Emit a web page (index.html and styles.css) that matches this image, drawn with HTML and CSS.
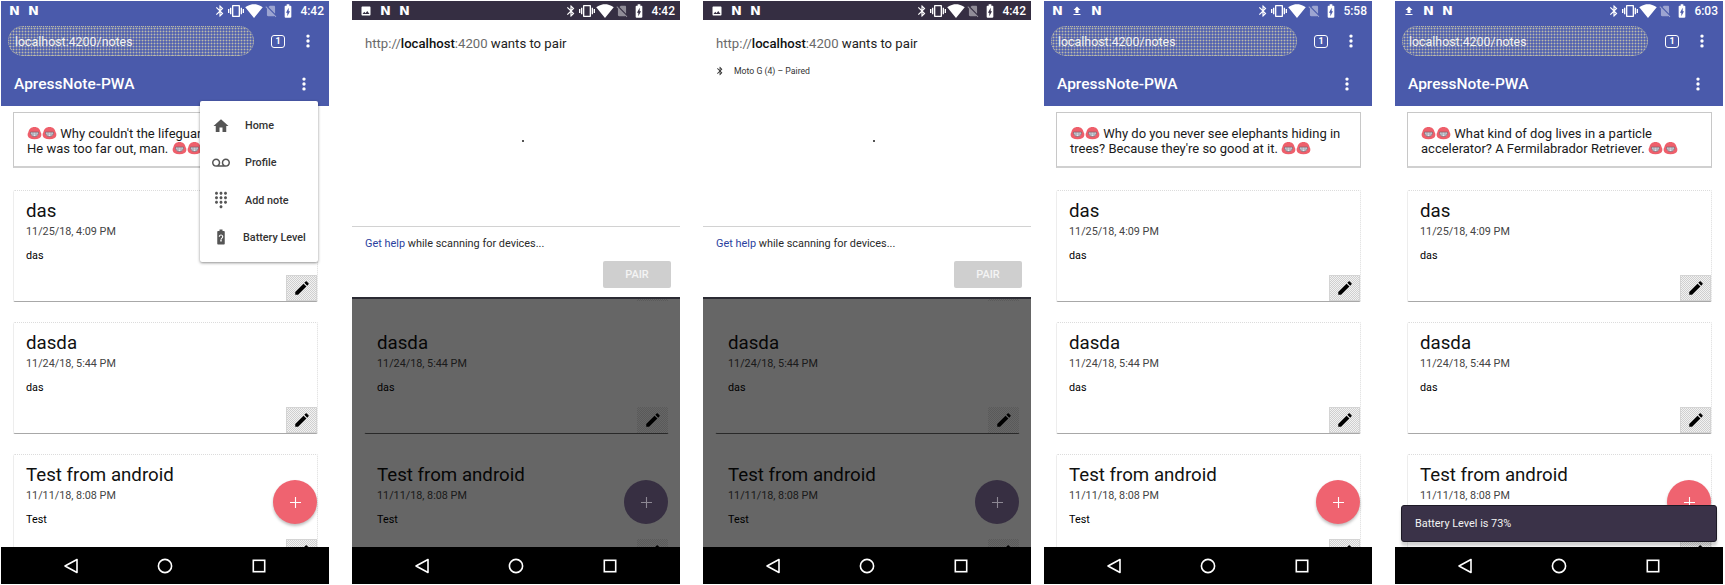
FILE: index.html
```html
<!DOCTYPE html>
<html lang="en">
<head>
<meta charset="utf-8">
<title>ApressNote-PWA</title>
<link rel="stylesheet" href="styles.css">
</head>
<body>
<svg class="sprite" aria-hidden="true">
  <symbol id="i-home" viewBox="0 0 24 24"><path d="M10 20v-6h4v6h5v-8h3L12 3 2 12h3v8z"/></symbol>
  <symbol id="i-voicemail" viewBox="0 0 24 24"><path d="M18.5 6C15.46 6 13 8.46 13 11.5c0 1.33.47 2.55 1.26 3.5H9.74c.79-.95 1.26-2.17 1.26-3.5C11 8.46 8.54 6 5.5 6S0 8.46 0 11.5 2.46 17 5.5 17h13c3.04 0 5.5-2.46 5.5-5.5S21.54 6 18.5 6zm-13 9C3.57 15 2 13.43 2 11.5S3.57 8 5.5 8 9 9.57 9 11.5 7.43 15 5.5 15zm13 0c-1.93 0-3.5-1.57-3.5-3.5S16.57 8 18.5 8 22 9.57 22 11.5 20.43 15 18.5 15z"/></symbol>
  <symbol id="i-dialpad" viewBox="0 0 24 24"><path d="M12 19c-1.1 0-2 .9-2 2s.9 2 2 2 2-.9 2-2-.9-2-2-2zM6 1c-1.1 0-2 .9-2 2s.9 2 2 2 2-.9 2-2-.9-2-2-2zm0 6c-1.1 0-2 .9-2 2s.9 2 2 2 2-.9 2-2-.9-2-2-2zm0 6c-1.1 0-2 .9-2 2s.9 2 2 2 2-.9 2-2-.9-2-2-2zm12-8c1.1 0 2-.9 2-2s-.9-2-2-2-2 .9-2 2 .9 2 2 2zm-6 8c-1.1 0-2 .9-2 2s.9 2 2 2 2-.9 2-2-.9-2-2-2zm6 0c-1.1 0-2 .9-2 2s.9 2 2 2 2-.9 2-2-.9-2-2-2zm0-6c-1.1 0-2 .9-2 2s.9 2 2 2 2-.9 2-2-.9-2-2-2zm-6 0c-1.1 0-2 .9-2 2s.9 2 2 2 2-.9 2-2-.9-2-2-2zm0-6c-1.1 0-2 .9-2 2s.9 2 2 2 2-.9 2-2-.9-2-2-2z"/></symbol>
  <symbol id="i-battery-unknown" viewBox="0 0 24 24"><path d="M15.67 4H14V2h-4v2H8.33C7.6 4 7 4.6 7 5.33v15.33C7 21.4 7.6 22 8.33 22h7.33c.74 0 1.34-.6 1.34-1.33V5.33C17 4.6 16.4 4 15.67 4zm-2.72 13.95h-1.9v-1.9h1.9v1.9zm1.35-4.77s-.38.42-.67.71c-.48.48-.83 1.15-.83 1.61h-1.6c0-.83.46-1.52.93-2l.93-.94c.27-.27.44-.65.44-1.06 0-.83-.67-1.5-1.5-1.5s-1.5.67-1.5 1.5H9c0-1.66 1.34-3 3-3s3 1.34 3 3c0 .66-.27 1.26-.7 1.68z"/></symbol>
  <symbol id="i-edit" viewBox="0 0 24 24"><path d="M3 17.25V21h3.75L17.81 9.94l-3.75-3.75L3 17.25zM20.71 7.04c.39-.39.39-1.02 0-1.41l-2.34-2.34c-.39-.39-1.02-.39-1.41 0l-1.83 1.83 3.75 3.75 1.83-1.83z"/></symbol>
  <symbol id="i-bt" viewBox="0 0 24 24"><path d="M17.71 7.71L12 2h-1v7.59L6.41 5 5 6.41 10.59 12 5 17.59 6.41 19 11 14.41V22h1l5.71-5.71-4.3-4.29 4.3-4.29zM13 5.83l1.88 1.88L13 9.59V5.83zm1.88 10.46L13 18.17v-3.76l1.88 1.88z"/></symbol>
  <symbol id="i-vib" viewBox="0 0 24 24"><path d="M0 15h2V9H0v6zm3 2h2V7H3v10zm19-8v6h2V9h-2zm-3 8h2V7h-2v10zM16.5 3h-9C6.67 3 6 3.67 6 4.5v15c0 .83.67 1.5 1.5 1.5h9c.83 0 1.5-.67 1.5-1.5v-15c0-.83-.67-1.5-1.5-1.5zM16 19H8V5h8v14z"/></symbol>
  <symbol id="i-wifi" viewBox="0 0 24 24"><path d="M12.01 21.49L23.64 7c-.45-.34-4.93-4-11.64-4C5.28 3 .81 6.66.36 7l11.63 14.49.01.01.01-.01z"/></symbol>
  <symbol id="i-nosim" viewBox="0 0 24 24"><path d="M18.99 5c0-1.1-.89-2-1.99-2h-7L7.66 5.34 19 16.68 18.99 5zM3.65 3.88L2.38 5.15 5 7.77V19c0 1.1.9 2 2 2h10.01c.35 0 .67-.1.96-.26l1.88 1.88 1.27-1.27L3.65 3.88z"/></symbol>
  <symbol id="i-batt" viewBox="0 0 24 24"><path d="M15.67 4H14V2h-4v2H8.33C7.6 4 7 4.6 7 5.33v15.33C7 21.4 7.6 22 8.33 22h7.33c.74 0 1.34-.6 1.34-1.33V5.33C17 4.6 16.4 4 15.67 4zM11 20v-5.5H9L13 7v5.5h2L11 20z"/></symbol>
  <symbol id="i-upload" viewBox="0 0 24 24"><path d="M9 16h6v-6h4l-7-7-7 7h4v6zm-4 2h14v2H5z"/></symbol>
  <symbol id="i-photo" viewBox="0 0 24 24"><path d="M21 19V5c0-1.1-.9-2-2-2H5c-1.1 0-2 .9-2 2v14c0 1.1.9 2 2 2h14c1.1 0 2-.9 2-2zM8.500 13.500l2.500 3.010L14.500 12l4.500 6H5l3.500-4.500z"/></symbol>
  <symbol id="i-dots" viewBox="0 0 6 20"><circle cx="3" cy="3" r="2.4"/><circle cx="3" cy="10" r="2.4"/><circle cx="3" cy="17" r="2.4"/></symbol>
  <symbol id="i-plus" viewBox="0 0 12 12"><path d="M5.400 0h1.200v5.400H12v1.200H6.600V12H5.400V6.600H0V5.400h5.400z"/></symbol>
  <symbol id="i-back" viewBox="0 0 16 16"><path d="M14 1.500v13L2 8z" fill="none" stroke="#fff" stroke-width="1.600" stroke-linejoin="round"/></symbol>
  <symbol id="i-circle" viewBox="0 0 16 16"><circle cx="8" cy="8" r="6.600" fill="none" stroke="#fff" stroke-width="1.600"/></symbol>
  <symbol id="i-square" viewBox="0 0 16 16"><rect x="2.300" y="2.300" width="11.400" height="11.400" fill="none" stroke="#fff" stroke-width="1.600"/></symbol>
  <symbol id="i-emoji" viewBox="0 0 16 16"><path d="M8 1c4 0 6.500 2.500 7 6 .8 1 1 2.500.7 4-.5 2.500-3.200 4-7.700 4S.8 13.500.3 11C0 9.500.2 8 1 7 1.500 3.500 4 1 8 1z" fill="#ee5f6b"/><path d="M3.400 7h9.200c0 3-1.900 5-4.600 5s-4.600-2-4.600-5z" fill="#e4e7ee" stroke="#5a5f6b" stroke-width=".7"/><path d="M3.800 9.200h8.400M6.300 7v4.800M9.700 7v4.800" stroke="#7a7e8a" stroke-width=".6"/></symbol>
</svg>

<main class="strip">

  <!-- Phone 1: menu open -->
  <section class="phone">
    <header class="status">
      <div class="status-left"><b class="notif">N</b><b class="notif">N</b></div>
      <div class="status-right">
        <svg class="s-ic s-bt"><use href="#i-bt"/></svg><svg class="s-ic s-vib"><use href="#i-vib"/></svg><svg class="s-ic s-wifi"><use href="#i-wifi"/></svg><svg class="s-ic s-dim"><use href="#i-nosim"/></svg><svg class="s-ic s-batt"><use href="#i-batt"/></svg><span class="clock">4:42</span>
      </div>
    </header>
    <div class="browser">
      <div class="pill">localhost:4200/notes</div>
      <span class="tabs">1</span>
      <svg class="dots"><use href="#i-dots"/></svg>
    </div>
    <div class="appbar">
      <h1 class="app-title">ApressNote-PWA</h1>
      <svg class="dots"><use href="#i-dots"/></svg>
    </div>
    <div class="content">
      <div class="joke"><svg class="emoji"><use href="#i-emoji"/></svg><svg class="emoji"><use href="#i-emoji"/></svg> Why couldn't the lifeguard save the hippie? He was too far out, man. <svg class="emoji"><use href="#i-emoji"/></svg><svg class="emoji"><use href="#i-emoji"/></svg></div>
      <article class="card"><h2 class="card-title">das</h2><p class="card-date">11/25/18, 4:09 PM</p><p class="card-body">das</p><div class="edit"><svg><use href="#i-edit"/></svg></div></article>
      <article class="card"><h2 class="card-title">dasda</h2><p class="card-date">11/24/18, 5:44 PM</p><p class="card-body">das</p><div class="edit"><svg><use href="#i-edit"/></svg></div></article>
      <article class="card"><h2 class="card-title">Test from android</h2><p class="card-date">11/11/18, 8:08 PM</p><p class="card-body">Test</p><div class="edit"><svg><use href="#i-edit"/></svg></div></article>
      <div class="fab"><svg><use href="#i-plus"/></svg></div>
    </div>
    <nav class="navbar"><svg><use href="#i-back"/></svg><svg><use href="#i-circle"/></svg><svg><use href="#i-square"/></svg></nav>
    <ul class="menu">
      <li class="menu-item"><svg><use href="#i-home"/></svg><span>Home</span></li>
      <li class="menu-item"><svg><use href="#i-voicemail"/></svg><span>Profile</span></li>
      <li class="menu-item"><svg><use href="#i-dialpad"/></svg><span>Add note</span></li>
      <li class="menu-item menu-item--tight"><svg><use href="#i-battery-unknown"/></svg><span>Battery Level</span></li>
    </ul>
  </section>

  <!-- Phone 2: chooser scanning -->
  <section class="phone phone--dialog">
    <header class="status status--dark">
      <div class="status-left"><svg class="s-ic s-left"><use href="#i-photo"/></svg><b class="notif">N</b><b class="notif">N</b></div>
      <div class="status-right">
        <svg class="s-ic s-bt"><use href="#i-bt"/></svg><svg class="s-ic s-vib"><use href="#i-vib"/></svg><svg class="s-ic s-wifi"><use href="#i-wifi"/></svg><svg class="s-ic s-dim"><use href="#i-nosim"/></svg><svg class="s-ic s-batt"><use href="#i-batt"/></svg><span class="clock">4:42</span>
      </div>
    </header>
    <div class="browser"></div>
    <div class="appbar"></div>
    <div class="content">
      <div class="joke"></div>
      <article class="card"><h2 class="card-title">das</h2><p class="card-date">11/25/18, 4:09 PM</p><p class="card-body">das</p><div class="edit"><svg><use href="#i-edit"/></svg></div></article>
      <article class="card"><h2 class="card-title">dasda</h2><p class="card-date">11/24/18, 5:44 PM</p><p class="card-body">das</p><div class="edit"><svg><use href="#i-edit"/></svg></div></article>
      <article class="card"><h2 class="card-title">Test from android</h2><p class="card-date">11/11/18, 8:08 PM</p><p class="card-body">Test</p><div class="edit"><svg><use href="#i-edit"/></svg></div></article>
      <div class="scrim"></div>
      <div class="fab fab--dim"><svg><use href="#i-plus"/></svg></div>
    </div>
    <nav class="navbar"><svg><use href="#i-back"/></svg><svg><use href="#i-circle"/></svg><svg><use href="#i-square"/></svg></nav>
    <div class="chooser">
      <p class="chooser-title"><span class="muted">http://</span><strong>localhost</strong><span class="muted">:4200</span> wants to pair</p>
      <div class="chooser-list"><i class="spinner"></i></div>
      <p class="chooser-help"><a class="link">Get help</a> while scanning for devices...</p>
      <div class="chooser-actions"><span class="pair">PAIR</span></div>
    </div>
  </section>

  <!-- Phone 3: chooser with device -->
  <section class="phone phone--dialog">
    <header class="status status--dark">
      <div class="status-left"><svg class="s-ic s-left"><use href="#i-photo"/></svg><b class="notif">N</b><b class="notif">N</b></div>
      <div class="status-right">
        <svg class="s-ic s-bt"><use href="#i-bt"/></svg><svg class="s-ic s-vib"><use href="#i-vib"/></svg><svg class="s-ic s-wifi"><use href="#i-wifi"/></svg><svg class="s-ic s-dim"><use href="#i-nosim"/></svg><svg class="s-ic s-batt"><use href="#i-batt"/></svg><span class="clock">4:42</span>
      </div>
    </header>
    <div class="browser"></div>
    <div class="appbar"></div>
    <div class="content">
      <div class="joke"></div>
      <article class="card"><h2 class="card-title">das</h2><p class="card-date">11/25/18, 4:09 PM</p><p class="card-body">das</p><div class="edit"><svg><use href="#i-edit"/></svg></div></article>
      <article class="card"><h2 class="card-title">dasda</h2><p class="card-date">11/24/18, 5:44 PM</p><p class="card-body">das</p><div class="edit"><svg><use href="#i-edit"/></svg></div></article>
      <article class="card"><h2 class="card-title">Test from android</h2><p class="card-date">11/11/18, 8:08 PM</p><p class="card-body">Test</p><div class="edit"><svg><use href="#i-edit"/></svg></div></article>
      <div class="scrim"></div>
      <div class="fab fab--dim"><svg><use href="#i-plus"/></svg></div>
    </div>
    <nav class="navbar"><svg><use href="#i-back"/></svg><svg><use href="#i-circle"/></svg><svg><use href="#i-square"/></svg></nav>
    <div class="chooser">
      <p class="chooser-title"><span class="muted">http://</span><strong>localhost</strong><span class="muted">:4200</span> wants to pair</p>
      <div class="chooser-list"><div class="device"><svg><use href="#i-bt"/></svg><span>Moto G (4) – Paired</span></div><i class="spinner"></i></div>
      <p class="chooser-help"><a class="link">Get help</a> while scanning for devices...</p>
      <div class="chooser-actions"><span class="pair">PAIR</span></div>
    </div>
  </section>

  <!-- Phone 4 -->
  <section class="phone phone--gap">
    <header class="status">
      <div class="status-left"><b class="notif">N</b><svg class="s-ic s-left"><use href="#i-upload"/></svg><b class="notif">N</b></div>
      <div class="status-right">
        <svg class="s-ic s-bt"><use href="#i-bt"/></svg><svg class="s-ic s-vib"><use href="#i-vib"/></svg><svg class="s-ic s-wifi"><use href="#i-wifi"/></svg><svg class="s-ic s-dim"><use href="#i-nosim"/></svg><svg class="s-ic s-batt"><use href="#i-batt"/></svg><span class="clock">5:58</span>
      </div>
    </header>
    <div class="browser">
      <div class="pill">localhost:4200/notes</div>
      <span class="tabs">1</span>
      <svg class="dots"><use href="#i-dots"/></svg>
    </div>
    <div class="appbar">
      <h1 class="app-title">ApressNote-PWA</h1>
      <svg class="dots"><use href="#i-dots"/></svg>
    </div>
    <div class="content">
      <div class="joke"><svg class="emoji"><use href="#i-emoji"/></svg><svg class="emoji"><use href="#i-emoji"/></svg> Why do you never see elephants hiding in trees? Because they're so good at it. <svg class="emoji"><use href="#i-emoji"/></svg><svg class="emoji"><use href="#i-emoji"/></svg></div>
      <article class="card"><h2 class="card-title">das</h2><p class="card-date">11/25/18, 4:09 PM</p><p class="card-body">das</p><div class="edit"><svg><use href="#i-edit"/></svg></div></article>
      <article class="card"><h2 class="card-title">dasda</h2><p class="card-date">11/24/18, 5:44 PM</p><p class="card-body">das</p><div class="edit"><svg><use href="#i-edit"/></svg></div></article>
      <article class="card"><h2 class="card-title">Test from android</h2><p class="card-date">11/11/18, 8:08 PM</p><p class="card-body">Test</p><div class="edit"><svg><use href="#i-edit"/></svg></div></article>
      <div class="fab"><svg><use href="#i-plus"/></svg></div>
    </div>
    <nav class="navbar"><svg><use href="#i-back"/></svg><svg><use href="#i-circle"/></svg><svg><use href="#i-square"/></svg></nav>
  </section>

  <!-- Phone 5: toast -->
  <section class="phone">
    <header class="status">
      <div class="status-left"><svg class="s-ic s-left"><use href="#i-upload"/></svg><b class="notif">N</b><b class="notif">N</b></div>
      <div class="status-right">
        <svg class="s-ic s-bt"><use href="#i-bt"/></svg><svg class="s-ic s-vib"><use href="#i-vib"/></svg><svg class="s-ic s-wifi"><use href="#i-wifi"/></svg><svg class="s-ic s-dim"><use href="#i-nosim"/></svg><svg class="s-ic s-batt"><use href="#i-batt"/></svg><span class="clock">6:03</span>
      </div>
    </header>
    <div class="browser">
      <div class="pill">localhost:4200/notes</div>
      <span class="tabs">1</span>
      <svg class="dots"><use href="#i-dots"/></svg>
    </div>
    <div class="appbar">
      <h1 class="app-title">ApressNote-PWA</h1>
      <svg class="dots"><use href="#i-dots"/></svg>
    </div>
    <div class="content">
      <div class="joke"><svg class="emoji"><use href="#i-emoji"/></svg><svg class="emoji"><use href="#i-emoji"/></svg> What kind of dog lives in a particle accelerator? A Fermilabrador Retriever. <svg class="emoji"><use href="#i-emoji"/></svg><svg class="emoji"><use href="#i-emoji"/></svg></div>
      <article class="card"><h2 class="card-title">das</h2><p class="card-date">11/25/18, 4:09 PM</p><p class="card-body">das</p><div class="edit"><svg><use href="#i-edit"/></svg></div></article>
      <article class="card"><h2 class="card-title">dasda</h2><p class="card-date">11/24/18, 5:44 PM</p><p class="card-body">das</p><div class="edit"><svg><use href="#i-edit"/></svg></div></article>
      <article class="card"><h2 class="card-title">Test from android</h2><p class="card-date">11/11/18, 8:08 PM</p><p class="card-body">Test</p><div class="edit"><svg><use href="#i-edit"/></svg></div></article>
      <div class="fab"><svg><use href="#i-plus"/></svg></div>
      <div class="toast">Battery Level is 73%</div>
    </div>
    <nav class="navbar"><svg><use href="#i-back"/></svg><svg><use href="#i-circle"/></svg><svg><use href="#i-square"/></svg></nav>
  </section>

</main>
</body>
</html>
```

FILE: styles.css
```css
* { box-sizing: border-box; }

html, body {
  margin: 0;
  padding: 0;
  background: #fff;
  height: 585px;
  overflow: hidden;
  font-family: Roboto, "Liberation Sans", sans-serif;
  color: #111;
}

.sprite { display: none; }

.strip {
  display: flex;
  gap: 23px;
  padding: 1px 0 0 1px;
}

.phone {
  position: relative;
  flex: 0 0 328px;
  height: 583px;
  display: flex;
  flex-direction: column;
  overflow: hidden;
  background: #fff;
}

.phone--gap { margin-left: -10px; }

/* status bar */
.status {
  flex: 0 0 19px;
  display: flex;
  justify-content: space-between;
  align-items: center;
  padding: 0 5px 0 8px;
  background: #4a5aab;
  color: #fff;
}
.status--dark { background: #352e42; }
.status-left { display: flex; align-items: center; gap: 8px; }
.status-right { display: flex; align-items: center; gap: 1px; }
.notif {
  font-family: "DejaVu Sans", sans-serif;
  font-size: 13px;
  font-weight: 700;
  line-height: 1;
  width: 11px;
  text-align: center;
}
.s-ic { width: 14px; height: 14px; fill: #fff; }
.s-left { width: 12px; height: 12px; }
.s-bt { width: 14px; height: 14px; }
.s-vib { width: 16px; height: 16px; }
.s-wifi { width: 18px; height: 18px; }
.s-dim { opacity: .45; }
.s-batt { width: 16px; height: 16px; margin-left: 1px; }
.clock { font-size: 12px; font-weight: 500; margin-left: 3px; }

/* browser + app toolbars */
.browser {
  flex: 0 0 42px;
  display: flex;
  align-items: center;
  padding: 0 18px 0 7px;
  background: #4a5aab;
  color: #fff;
}
.pill {
  flex: 0 0 246px;
  height: 30px;
  border-radius: 15px;
  padding-left: 6px;
  display: flex;
  align-items: center;
  font-size: 12.4px;
  color: #f2f2f2;
  border: 1px dotted #b9b7a4;
  background: radial-gradient(circle, #bdbba8 .8px, transparent 1.1px) 0 0 / 3px 3px, rgba(255, 255, 255, .07);
}
.tabs {
  margin-left: 17px;
  width: 14px;
  height: 13px;
  border: 1.5px solid #fff;
  border-radius: 3px;
  font-size: 9px;
  font-weight: 700;
  line-height: 10px;
  text-align: center;
}
.dots { width: 6px; height: 14px; fill: #fff; margin-left: auto; }
.appbar {
  flex: 0 0 44px;
  display: flex;
  align-items: center;
  padding: 0 22px 0 13px;
  background: #4a5aab;
  color: #fff;
}
.app-title {
  margin: 0;
  font-size: 15.5px;
  font-weight: 500;
}

/* content */
.content {
  position: relative;
  flex: 1;
  min-height: 0;
  overflow: hidden;
  padding: 6px 11px 0 12px;
  background: #fff;
}
.joke {
  height: 56px;
  margin-bottom: 22px;
  padding: 13px 8px 0 13px;
  border: 1px solid #c8c8c8;
  border-bottom: 2px solid #d0d0d0;
  font-size: 13px;
  line-height: 15px;
  color: #1a1a1a;
}
.emoji { width: 15px; height: 14px; vertical-align: -2px; }
.card {
  position: relative;
  height: 112px;
  margin-bottom: 20px;
  padding: 9px 12px 0;
  border: 1px dotted #dcdcdc;
  border-bottom: 1px solid #a8a8a8;
  border-radius: 2px;
}
.card-title {
  margin: 0;
  font-size: 18.7px;
  font-weight: 400;
  line-height: 22px;
  color: #111;
}
.card-date {
  margin: 2px 0 0;
  font-size: 10.8px;
  line-height: 16px;
  color: #444;
}
.card-body {
  margin: 9px 0 0;
  font-size: 10.8px;
  line-height: 14px;
  color: #000;
}
.edit {
  position: absolute;
  right: 0;
  bottom: 0;
  width: 31px;
  height: 26px;
  display: flex;
  align-items: center;
  justify-content: center;
  border: 1px solid #d4d4d4;
  background: repeating-conic-gradient(#cfcfcf 0 25%, #f2f2f2 0 50%) 0 0 / 2px 2px;
}
.edit svg { width: 18px; height: 18px; fill: #000; }

/* notes seen through the scrim lose their card borders */
.phone--dialog .card {
  border-color: transparent;
  border-bottom: 1px solid #666;
}
.phone--dialog .card:first-of-type { border-bottom-color: transparent; }
.phone--dialog .edit {
  border: 0;
  background: repeating-conic-gradient(#e2e2e2 0 25%, #fff 0 50%) 0 0 / 2px 2px;
}

.fab {
  position: absolute;
  left: 272px;
  top: 374px;
  width: 44px;
  height: 44px;
  display: flex;
  align-items: center;
  justify-content: center;
  border-radius: 50%;
  background: #ef6370;
  box-shadow: 0 2px 3px rgba(0, 0, 0, .25);
  z-index: 2;
}
.fab svg { width: 11px; height: 11px; fill: #fff; }
.fab--dim { background: #372f42; box-shadow: none; }
.fab--dim svg { fill: #8d8894; }

.scrim {
  position: absolute;
  inset: 0;
  background: rgba(0, 0, 0, .6);
  z-index: 1;
}

.toast {
  position: absolute;
  left: 6px;
  right: 6px;
  top: 399px;
  height: 37px;
  padding-left: 13px;
  display: flex;
  align-items: center;
  border: 1px solid #1d1a26;
  border-radius: 3px;
  background: #3a3248;
  box-shadow: 0 4px 3px rgba(0, 0, 0, .18);
  font-size: 10.9px;
  color: #f2f2f2;
  z-index: 3;
}

/* nav */
.navbar {
  flex: 0 0 37px;
  display: flex;
  align-items: center;
  gap: 78px;
  padding-left: 62px;
  background: #000;
}
.navbar svg { width: 16px; height: 16px; }

/* overflow menu */
.menu {
  position: absolute;
  left: 199px;
  top: 100px;
  width: 118px;
  height: 161px;
  margin: 0;
  padding: 6px 0;
  list-style: none;
  display: flex;
  flex-direction: column;
  background: #fff;
  border-radius: 2px;
  box-shadow: 0 1px 3px rgba(0, 0, 0, .45);
  z-index: 5;
}
.menu-item {
  flex: 1;
  display: flex;
  align-items: center;
  gap: 15px;
  padding-left: 12px;
  font-size: 10.8px;
  font-weight: 500;
  color: #333;
}
.menu-item svg { width: 18px; height: 18px; fill: #555; flex: none; }
.menu-item--tight { gap: 13px; }

/* bluetooth chooser */
.chooser {
  position: absolute;
  left: 0;
  right: 0;
  top: 19px;
  height: 279px;
  display: flex;
  flex-direction: column;
  background: #fff;
  border-bottom: 2px solid #2b2b33;
  z-index: 4;
}
.chooser-title {
  margin: 0;
  padding: 15px 13px 0;
  font-size: 13.15px;
  line-height: 18px;
  color: #222;
}
.chooser-title strong { font-weight: 500; color: #111; }
.muted { color: #6a6a6a; }
.chooser-list {
  position: relative;
  flex: 1;
  padding: 13px 12px 0;
  border-bottom: 1px solid #d2d2d2;
}
.device {
  display: flex;
  align-items: center;
  gap: 9px;
  font-size: 8.7px;
  color: #333;
}
.device svg { width: 10px; height: 10px; fill: #333; }
.spinner {
  position: absolute;
  left: 170px;
  top: 87px;
  width: 2px;
  height: 2px;
  background: #555;
}
.chooser-help {
  margin: 0;
  padding: 9px 13px 0;
  font-size: 10.9px;
  line-height: 15px;
  color: #2a2a2a;
}
.link { color: #2b3f9e; }
.chooser-actions {
  display: flex;
  justify-content: flex-end;
  padding: 10px 9px 9px 0;
}
.pair {
  width: 68px;
  height: 27px;
  display: flex;
  align-items: center;
  justify-content: center;
  border-radius: 2px;
  background: #cfcfcf;
  font-size: 11px;
  font-weight: 500;
  color: #f4f4f4;
}
```
